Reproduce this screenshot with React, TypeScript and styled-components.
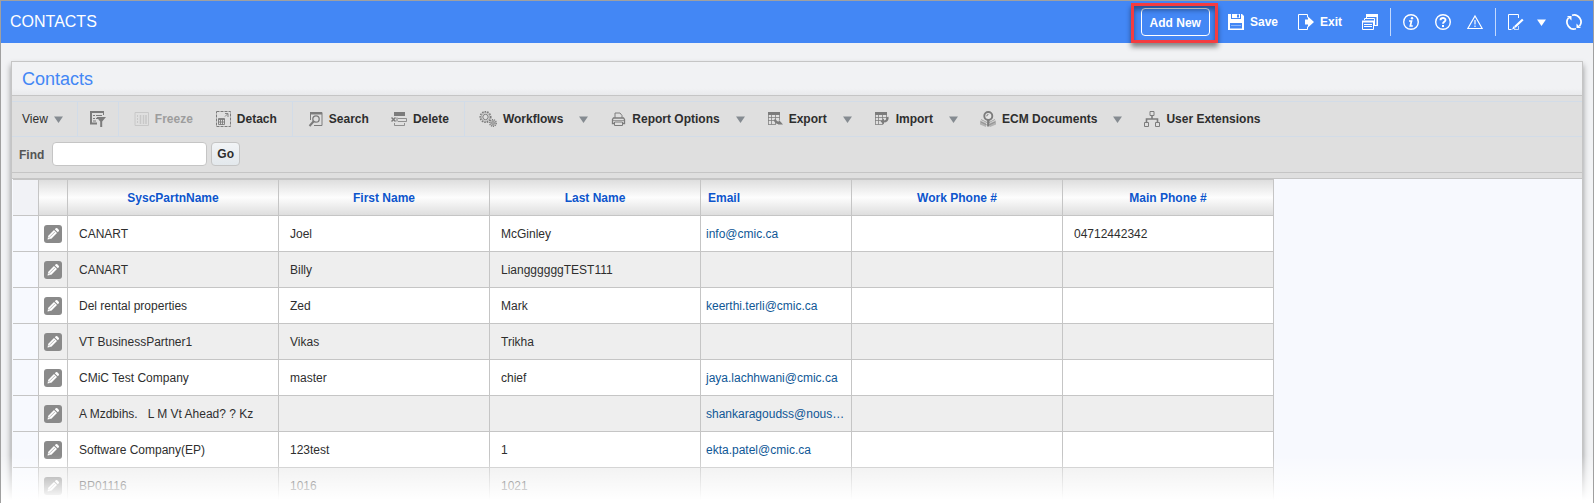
import React from "react";
import styled, { createGlobalStyle } from "styled-components";

const GlobalStyle = createGlobalStyle`
  *, *::before, *::after { box-sizing: border-box; }
  body {
    margin: 0;
    background: #fff;
    font-family: "Liberation Sans", Arial, sans-serif;
    font-size: 12px;
    line-height: 16px;
    color: #2e2e2e;
  }
  button, input { font: inherit; color: inherit; }
`;

const line = "#c5c5c5";
const faintLine = "#d2dce8";

const Page = styled.div`
  position: relative;
  display: flex;
  flex-direction: column;
  height: 100vh;
  overflow: hidden;
  border: 1px solid #a0a0a0;
  border-bottom: 0;
  background: #f1f2f4;
`;

const BottomFade = styled.div`
  position: absolute;
  left: -1px;
  right: -1px;
  bottom: 0;
  height: 48px;
  pointer-events: none;
  background: linear-gradient(rgba(255, 255, 255, 0), #fff 94%);
`;

const TopBar = styled.header`
  display: flex;
  flex: none;
  align-items: center;
  justify-content: space-between;
  height: 42px;
  padding: 0 11px 0 9px;
  background: #4387f5;
  color: #fff;
`;

const AppTitle = styled.h1`
  margin: 0;
  font-size: 16px;
  font-weight: 400;
  line-height: 20px;
`;

const Actions = styled.div`
  display: flex;
  align-items: center;
`;

const BarGroup = styled.div<{ $gap: number }>`
  display: flex;
  align-items: center;
  gap: ${(p) => p.$gap}px;
`;

const BarDivider = styled.span`
  width: 1px;
  height: 28px;
  margin: 0 12px;
  background: #c3d9fd;
`;

const BareButton = styled.button`
  display: flex;
  align-items: center;
  gap: 6px;
  padding: 0;
  border: 0;
  background: none;
  font-weight: 700;
  white-space: nowrap;
  cursor: pointer;
  svg { display: block; flex: none; }
  &:disabled { color: #9d9d9d; cursor: default; }
`;

const Highlight = styled.div`
  position: relative;
  margin-right: 18px;
  &::after {
    content: "";
    position: absolute;
    inset: -5px -8px -7px -10px;
    border: 3px solid #f43c40;
    box-shadow: 0 4px 5px rgba(0, 0, 0, 0.45), inset 0 4px 5px rgba(0, 0, 0, 0.4);
    pointer-events: none;
  }
`;

const OutlineButton = styled.button`
  display: block;
  height: 28px;
  padding: 1px 8px 0;
  border: 1px solid #fff;
  border-radius: 4px;
  background: #4387f5;
  font-weight: 700;
  cursor: pointer;
`;

const Panel = styled.section`
  display: flex;
  flex: 1;
  flex-direction: column;
  margin: 18px 10px 0;
  border: 1px solid ${line};
  border-bottom: 0;
  background: #f7f9fe;
  box-shadow: 0 4px 6px rgba(0, 0, 0, 0.4);
`;

const PanelTitle = styled.h2`
  margin: 0;
  padding: 6px 10px 5px;
  border-bottom: 1px solid ${line};
  background: linear-gradient(#f1f2f4 80%, #e9eaec);
  color: #4387f5;
  font-size: 18px;
  font-weight: 400;
  line-height: 22px;
`;

const Tools = styled.div`
  padding: 5px 0;
  border-bottom: 1px solid ${line};
  background: #dfdfdf;
`;

const ToolRow = styled.div`
  display: flex;
  height: 36px;
  border-top: 1px solid ${faintLine};
  border-bottom: 1px solid ${faintLine};
`;

const ToolGroup = styled.div<{ $pad?: string }>`
  display: flex;
  align-items: center;
  gap: 22px;
  padding: ${(p) => p.$pad ?? "0 15px 0 14px"};
  border-right: 1px solid ${faintLine};
  &:last-child { border-right: 0; }
`;

const ViewButton = styled(BareButton)`
  font-weight: 400;
`;

const Split = styled.div`
  display: flex;
  align-items: center;
  gap: 16px;
`;

const FindRow = styled.form`
  display: flex;
  align-items: center;
  height: 36px;
  padding: 0 7px 2px;
  border-bottom: 1px solid ${line};
`;

const FindLabel = styled.label`
  margin-right: 8px;
  padding-top: 2px;
  color: #555;
  font-weight: 700;
`;

const FindInput = styled.input`
  width: 155px;
  height: 24px;
  padding: 0 6px;
  border: 1px solid ${line};
  border-radius: 4px;
  background: #fff;
`;

const GoButton = styled.button`
  height: 24px;
  margin-left: 4px;
  padding: 0 5px;
  border: 1px solid ${line};
  border-radius: 4px;
  background: linear-gradient(#f2f4f6, #e3e8ec);
  font-weight: 700;
  cursor: pointer;
`;

const Grid = styled.table`
  width: 1261px;
  margin-left: 1px;
  border-collapse: separate;
  border-spacing: 0;
  table-layout: fixed;
`;

const HeadCell = styled.th<{ $align?: string }>`
  height: 37px;
  padding: 0 7px;
  border: solid ${line};
  border-width: 1px 1px 1px 0;
  background: linear-gradient(#dedede, #fdfdfd 50%, #dedede);
  color: #0d55cc;
  text-align: ${(p) => p.$align ?? "center"};
  &:first-child { background: #f1f2f6; }
`;

const Row = styled.tr`
  background: #fff;
  &:nth-child(even) { background: #eee; }
`;

const Cell = styled.td<{ $pad?: number }>`
  height: 36px;
  padding: 0 5px 0 ${(p) => p.$pad ?? 11}px;
  border: solid ${line};
  border-width: 0 1px 1px 0;
  white-space: pre;
  overflow: hidden;
`;

const RowMarker = styled(Cell)`
  background: #f7f9fe;
`;

const MailLink = styled.a`
  color: #0f5796;
  text-decoration: none;
`;

const EditButton = styled.button`
  display: block;
  width: 18px;
  height: 18px;
  padding: 0;
  border: 0;
  border-radius: 3px;
  background: #8a8a8a;
  cursor: pointer;
  svg { display: block; }
`;

type IconProps = { children: React.ReactNode; w?: number; h?: number };
const Icon = ({ children, w = 16, h = 16 }: IconProps) => (
  <svg width={w} height={h} viewBox={`0 0 ${w} ${h}`} fill="none" stroke="currentColor" aria-hidden="true">
    {children}
  </svg>
);

const GreyIcon = styled.span<{ $c?: string }>`
  display: block;
  color: ${(p) => p.$c ?? "#7c7c7c"};
`;

const Caret = ({ color = "#858b91" }: { color?: string }) => (
  <svg width="9" height="7" viewBox="0 0 9 7" aria-hidden="true">
    <path d="M0 0.5h9L4.5 7z" fill={color} />
  </svg>
);

const SaveIcon = () => (
  <Icon>
    <path d="M0 0h3v5h10V0h1l2 2v14h-1V8H1v8H0z" fill="currentColor" stroke="none" />
    <path d="M4 0h8v4H4zM9 .5v3h2v-3z" fill="currentColor" fillRule="evenodd" stroke="none" />
    <path d="M0 5h16v4H0zM0 8h2v8H0zM14 8h2v8h-2zM2 14.500h12V16H2z" fill="currentColor" stroke="none" />
    <path d="M3 11.500h10" stroke="#8db7fa" />
  </Icon>
);

const ExitIcon = () => (
  <Icon>
    <path d="M9.500 3.500v-3h-9v15h9v-3" />
    <path d="M7 5.500h3V2.500L16 8l-6 5.500v-3H7z" fill="currentColor" stroke="none" />
  </Icon>
);

const WindowsIcon = () => (
  <Icon>
    <path d="M4 0h12v3H4zM14.500 3H16v9h-3v-1h1.500z" fill="currentColor" stroke="none" />
    <path d="M2.500 6V4.500h10V12" />
    <path d="M4.500 1v3" />
    <path d="M.5 7.500h11v8H.5z" />
    <path d="M0 6.500h12v2H0z" fill="currentColor" stroke="none" />
    <path d="M2 10.500h8M2 12.500h8" />
  </Icon>
);

const InfoIcon = () => (
  <Icon>
    <circle cx="8" cy="8" r="7.300" strokeWidth="1.400" />
    <circle cx="9" cy="4.200" r="1.200" fill="currentColor" stroke="none" />
    <path d="M6 7h2.500L7.300 12h2.500" strokeWidth="1.700" />
  </Icon>
);

const HelpIcon = () => (
  <Icon>
    <circle cx="8" cy="8" r="7.300" strokeWidth="1.400" />
    <path d="M5.500 6.300C5.500 3.200 10.500 3.300 10.500 6c0 1.700-2.500 1.800-2.500 3.700" strokeWidth="1.900" />
    <path d="M7 11h2v2H7z" fill="currentColor" stroke="none" />
  </Icon>
);

const WarningIcon = () => (
  <Icon>
    <path d="M8 2L15.200 14.500H.8z" strokeWidth="1.200" />
    <path d="M8 6v4.500M8 11.500v1.500" strokeWidth="1.500" opacity=".8" />
  </Icon>
);

const NoteIcon = () => (
  <Icon>
    <path d="M10.500 4V.5H.5v15h3" />
    <path d="M6 15.500h4.500V12" opacity=".7" />
    <path d="M14.800 5.500L6.800 13" strokeWidth="2.200" />
    <path d="M4 15.500l1.500-3.300 2 2z" fill="currentColor" stroke="none" />
  </Icon>
);

const RefreshIcon = () => (
  <Icon>
    <path d="M6 1.300A7 7 0 0 1 13.500 12.300M10 14.700A7 7 0 0 1 2.500 3.700" strokeWidth="1.700" />
    <path d="M1 2h4.500v4.500zM15 14h-4.500V9.500z" fill="currentColor" stroke="none" />
  </Icon>
);

const FilterIcon = () => (
  <Icon>
    <path d="M0 1h14M1 0v13M0 12.500h7" strokeWidth="2" />
    <path d="M13.500 1v3M3 4.500h2M6 4.500h6M3 7.500h2M6 7.500h2M3 10h3" />
    <path d="M6.500 6H16l-3.800 4.500V16h-2v-5.500z" fill="currentColor" stroke="none" />
  </Icon>
);

const FreezeIcon = () => (
  <Icon>
    <path d="M2 1.500h13.500v13H2z" />
    <path d="M4.500 4v9" strokeDasharray="2 1" />
    <path d="M7.500 4v9M10.500 4v9M13 4v9" strokeWidth="1.500" />
  </Icon>
);

const DetachIcon = () => (
  <Icon>
    <path d="M1.500.5h14v15h-14z" strokeDasharray="3 1" />
    <path d="M3.500 7.500h6v6h-6zM3 8.500h7M3 11h7M5.500 8v6M7.500 8v6" strokeWidth=".9" />
    <path d="M10 5.500L12.500 3M10 2.500h3V6" strokeWidth=".9" />
  </Icon>
);

const SearchIcon = () => (
  <Icon>
    <path d="M3 1.500h12v13H7M3.500 1v8" />
    <path d="M3 2.500h12" strokeWidth="2" />
    <circle cx="9" cy="8" r="3.200" strokeWidth="1.300" />
    <path d="M6.500 10.500L2.500 15" strokeWidth="2" />
  </Icon>
);

const DeleteIcon = () => (
  <Icon>
    <path d="M3 1h11v4H3z" fill="currentColor" stroke="none" />
    <path d="M7 7.500h8.500v3H7M3.500 12v2.500h10V12" opacity=".8" />
    <path d="M.5 6.500l4 4M4.500 6.500l-4 4" strokeWidth="1.500" />
    <path d="M6 6.500v4" />
  </Icon>
);

const WorkflowIcon = () => (
  <Icon w={18}>
    <circle cx="6.500" cy="6" r="5.300" strokeWidth="1.500" strokeDasharray="1.600 1" />
    <circle cx="6.500" cy="6" r="4.300" opacity=".5" />
    <circle cx="6.500" cy="6" r="2.700" />
    <circle cx="14" cy="12" r="3.300" strokeWidth="1.300" strokeDasharray="1.200 .8" />
    <circle cx="14" cy="12" r="2.500" opacity=".5" />
    <circle cx="14" cy="12" r="1.300" />
  </Icon>
);

const PrintIcon = () => (
  <Icon>
    <path d="M5 7V2h5l2 2.500V7" />
    <path d="M4.500 12.500h-2v-4L3.500 7h10l1 1.500v4h-2" strokeWidth="1.300" />
    <path d="M3 9.500h11" opacity=".7" />
    <path d="M4.500 11h8v3.500h-8z" />
  </Icon>
);

const TableLines = () => (
  <>
    <path d="M1 1h12v3H1z" fill="currentColor" stroke="none" />
    <path d="M1.500 3v10.500M4.500 3v10.500M8.500 3v10M12.500 3v6M1 6.500h12M1 9.500h8M1 13.500h8" opacity=".75" />
  </>
);

const ExportIcon = () => (
  <Icon>
    <TableLines />
    <path d="M7.500 8.500c1 2.500 2.500 3.500 5 3.500" strokeWidth="2.200" />
    <path d="M12 9l4 4.500h-5z" fill="currentColor" stroke="none" />
  </Icon>
);

const ImportIcon = () => (
  <Icon>
    <TableLines />
    <path d="M13.500 6c.5 2.500-1 4.500-4 4.500" strokeWidth="2.200" />
    <path d="M10 7.500v6L6.500 10.500z" fill="currentColor" stroke="none" />
  </Icon>
);

const EcmIcon = () => (
  <Icon>
    <path d="M0 9.500l6 2.500v4l-6-2.500zM16 9.500L10 12v4l6-2.500z" fill="currentColor" stroke="none" opacity=".45" />
    <path d="M1 8.500l6 3M15 8.500l-6 3M1 11l6 3M15 11l-6 3" opacity=".6" />
    <circle cx="8.300" cy="5" r="4" fill="#e6e6e6" strokeWidth="1.900" />
    <path d="M6.800 5.300a1.600 1.600 0 0 1 1.600-1.800" />
    <path d="M8.300 9v6.500" strokeWidth="2.400" />
  </Icon>
);

const UserExtIcon = () => (
  <Icon>
    <path d="M6 .5h4v4H6zM.5 11.500h4v4h-4zM11.500 11.500h4v4h-4z" />
    <path d="M8 5v3M2.500 11V8h11v3" strokeWidth="1.600" />
  </Icon>
);

const PencilIcon = () => (
  <Icon w={18} h={18}>
    <path d="M3.500 14.500l.8-3.800 5.700-5.700 3 3-5.700 5.700z" fill="#fff" stroke="none" />
    <path d="M10.800 4.200l1-1q.8-.6 1.500.1l1.400 1.400q.7.700.1 1.500l-1 1z" fill="#fff" stroke="none" />
    <path d="M6 11.800l5-5" stroke="#a9a9a9" strokeWidth=".8" />
    <path d="M4.600 12.200l1.200 1.200" stroke="#8a8a8a" strokeWidth=".8" />
  </Icon>
);

type ToolProps = { icon: React.ReactNode; label: string; menu?: boolean; disabled?: boolean };
const Tool = ({ icon, label, menu, disabled }: ToolProps) => (
  <Split>
    <BareButton type="button" disabled={disabled}>
      <GreyIcon $c={disabled ? "#c8c8c8" : undefined}>{icon}</GreyIcon>
      {label}
    </BareButton>
    {menu && (
      <BareButton type="button" aria-label={`${label} menu`}>
        <Caret />
      </BareButton>
    )}
  </Split>
);

const contacts = [
  ["CANART", "Joel", "McGinley", "info@cmic.ca", "", "04712442342"],
  ["CANART", "Billy", "LianggggggTEST111", "", "", ""],
  ["Del rental properties", "Zed", "Mark", "keerthi.terli@cmic.ca", "", ""],
  ["VT BusinessPartner1", "Vikas", "Trikha", "", "", ""],
  ["CMiC Test Company", "master", "chief", "jaya.lachhwani@cmic.ca", "", ""],
  ["A Mzdbihs.   L M Vt Ahead? ? Kz", "", "", "shankaragoudss@nous…", "", ""],
  ["Software Company(EP)", "123test", "1", "ekta.patel@cmic.ca", "", ""],
  ["BP01116", "1016", "1021", "", "", ""],
];

const columnWidths = [26, 29, 211, 211, 211, 151, 211, 211];

export default function App() {
  return (
    <Page>
      <GlobalStyle />
      <TopBar>
        <AppTitle>CONTACTS</AppTitle>
        <Actions>
          <Highlight>
            <OutlineButton type="button">Add New</OutlineButton>
          </Highlight>
          <BarGroup $gap={20}>
            <BareButton type="button"><SaveIcon />Save</BareButton>
            <BareButton type="button"><ExitIcon />Exit</BareButton>
            <BareButton type="button" aria-label="Windows"><WindowsIcon /></BareButton>
          </BarGroup>
          <BarDivider />
          <BarGroup $gap={16}>
            <BareButton type="button" aria-label="Information"><InfoIcon /></BareButton>
            <BareButton type="button" aria-label="Help"><HelpIcon /></BareButton>
            <BareButton type="button" aria-label="Warnings"><WarningIcon /></BareButton>
          </BarGroup>
          <BarDivider />
          <BarGroup $gap={20}>
            <BarGroup $gap={13}>
              <BareButton type="button" aria-label="Notes"><NoteIcon /></BareButton>
              <BareButton type="button" aria-label="Notes menu"><Caret color="#fff" /></BareButton>
            </BarGroup>
            <BareButton type="button" aria-label="Refresh"><RefreshIcon /></BareButton>
          </BarGroup>
        </Actions>
      </TopBar>

      <Panel>
        <PanelTitle>Contacts</PanelTitle>
        <Tools>
          <ToolRow role="toolbar" aria-label="Contacts">
            <ToolGroup $pad="0 14px 0 10px">
              <ViewButton type="button">View <Caret /></ViewButton>
            </ToolGroup>
            <ToolGroup $pad="0 12px">
              <BareButton type="button" aria-label="Filter">
                <GreyIcon><FilterIcon /></GreyIcon>
              </BareButton>
            </ToolGroup>
            <ToolGroup>
              <Tool icon={<FreezeIcon />} label="Freeze" disabled />
              <Tool icon={<DetachIcon />} label="Detach" />
            </ToolGroup>
            <ToolGroup>
              <Tool icon={<SearchIcon />} label="Search" />
              <Tool icon={<DeleteIcon />} label="Delete" />
            </ToolGroup>
            <ToolGroup>
              <Tool icon={<WorkflowIcon />} label="Workflows" menu />
              <Tool icon={<PrintIcon />} label="Report Options" menu />
              <Tool icon={<ExportIcon />} label="Export" menu />
              <Tool icon={<ImportIcon />} label="Import" menu />
              <Tool icon={<EcmIcon />} label="ECM Documents" menu />
              <Tool icon={<UserExtIcon />} label="User Extensions" />
            </ToolGroup>
          </ToolRow>
          <FindRow onSubmit={(e) => e.preventDefault()}>
            <FindLabel htmlFor="find">Find</FindLabel>
            <FindInput id="find" type="text" />
            <GoButton type="submit">Go</GoButton>
          </FindRow>
        </Tools>

        <Grid>
          <colgroup>
            {columnWidths.map((w, i) => <col key={i} width={w} />)}
          </colgroup>
          <thead>
            <tr>
              <HeadCell />
              <HeadCell />
              <HeadCell>SyscPartnName</HeadCell>
              <HeadCell>First Name</HeadCell>
              <HeadCell>Last Name</HeadCell>
              <HeadCell $align="left">Email</HeadCell>
              <HeadCell>Work Phone #</HeadCell>
              <HeadCell>Main Phone #</HeadCell>
            </tr>
          </thead>
          <tbody>
            {contacts.map(([partner, first, last, email, work, main], i) => (
              <Row key={i}>
                <RowMarker />
                <Cell $pad={5}>
                  <EditButton type="button" aria-label={`Edit ${partner}`}><PencilIcon /></EditButton>
                </Cell>
                <Cell>{partner}</Cell>
                <Cell>{first}</Cell>
                <Cell>{last}</Cell>
                <Cell $pad={5}>{email && <MailLink href={`mailto:${email}`}>{email}</MailLink>}</Cell>
                <Cell>{work}</Cell>
                <Cell>{main}</Cell>
              </Row>
            ))}
          </tbody>
        </Grid>
      </Panel>
      <BottomFade />
    </Page>
  );
}
